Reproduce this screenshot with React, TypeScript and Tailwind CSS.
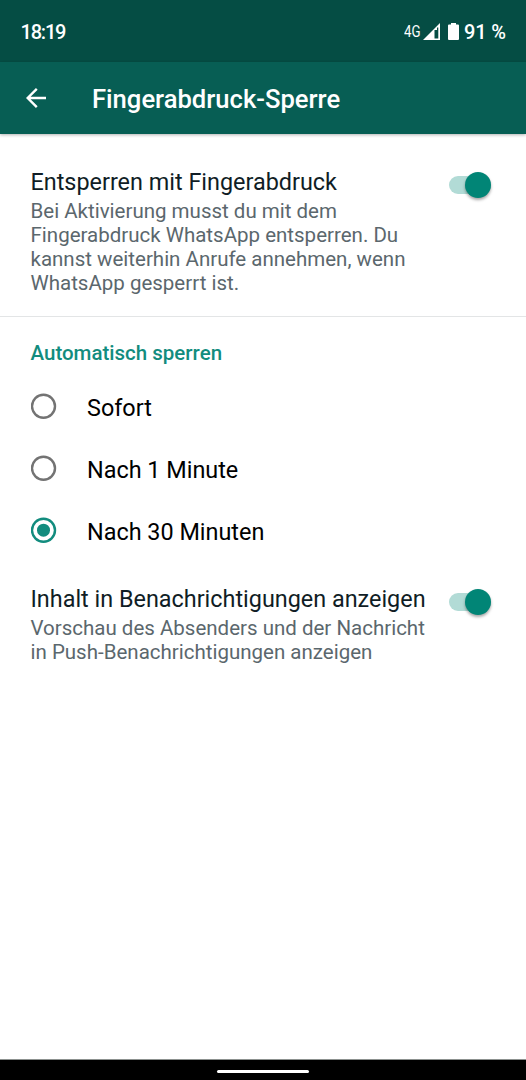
import { useState } from 'react';
import clsx from 'clsx';

interface SwitchProps {
  checked: boolean;
  label: string;
  onChange: (checked: boolean) => void;
}

interface SettingRowProps {
  title: string;
  lines: string[];
  checked: boolean;
  onChange: (checked: boolean) => void;
}

const lockOptions = [
  { id: 'now', label: 'Sofort' },
  { id: '1min', label: 'Nach 1 Minute' },
  { id: '30min', label: 'Nach 30 Minuten' },
];

function Switch({ checked, label, onChange }: SwitchProps) {
  return (
    <button
      role="switch"
      aria-checked={checked}
      aria-label={label}
      onClick={() => onChange(!checked)}
      className={clsx(
        'flex h-[18px] w-[42.5px] shrink-0 items-center rounded-full',
        checked ? 'justify-end bg-[#b2dbd6]' : 'justify-start bg-gray-300'
      )}
    >
      <span
        className={clsx(
          'size-[26px] shrink-0 rounded-full shadow-[0_2px_3px_rgba(0,0,0,0.35)]',
          checked ? 'bg-[#018576]' : 'bg-gray-50'
        )}
      />
    </button>
  );
}

function RadioIcon({ selected }: { selected: boolean }) {
  return (
    <svg
      className={clsx('size-[26px] shrink-0', selected ? 'text-[#128c7e]' : 'text-[#737373]')}
      viewBox="0 0 26 26"
    >
      <circle cx="12.5" cy="13.2" r="11.5" fill="none" stroke="currentColor" strokeWidth="2.4" />
      {selected && <circle cx="12.5" cy="13.2" r="6.5" fill="currentColor" />}
    </svg>
  );
}

function SettingRow({ title, lines, checked, onChange }: SettingRowProps) {
  return (
    <div className="flex items-start justify-between pr-[35px] pl-[30.5px]">
      <div className="whitespace-nowrap">
        <h2 className="text-[23.4px] leading-[30px] text-[#101d25]">{title}</h2>
        <p className="mt-[2px] text-[20.5px] leading-6 text-[#5b676d]">
          {lines.map((line) => (
            <span key={line} className="block">
              {line}
            </span>
          ))}
        </p>
      </div>
      <div className="mt-[9px] flex">
        <Switch checked={checked} label={title} onChange={onChange} />
      </div>
    </div>
  );
}

function StatusBar() {
  return (
    <div className="flex h-[62px] items-center justify-between bg-[#054d44] pt-px pr-5 pl-[20.5px] text-white">
      <span className="text-[20px] font-medium tracking-[-1.2px]">18:19</span>
      <div className="flex items-center">
        <span className="w-[19px] text-[16px]">
          <span className="inline-block origin-left scale-x-[0.83]">4G</span>
        </span>
        <svg width="17" height="17" viewBox="0 0 17 17" fill="white">
          <path fillRule="evenodd" d="M17 0v17H0zM11.5 7v8.500h3.800V4.500h-1.300v2.500z" />
        </svg>
        <svg className="ml-2" width="11" height="17" viewBox="0 0 11 17" fill="white">
          <path d="M3 0h5v1.500h2q1 0 1 1V16q0 1-1 1H1q-1 0-1-1V2.500q0-1 1-1h2z" />
        </svg>
        <span className="ml-[5px] text-[20px] font-medium tracking-[-0.1px]">91 %</span>
      </div>
    </div>
  );
}

export default function App() {
  const [fingerprint, setFingerprint] = useState(true);
  const [preview, setPreview] = useState(true);
  const [lockAfter, setLockAfter] = useState('30min');

  return (
    <div className="flex h-screen flex-col overflow-hidden bg-white font-['Roboto','Noto_Sans',sans-serif]">
      <StatusBar />

      {/* App bar */}
      <header className="flex h-[72px] shrink-0 items-center bg-[#075e54] pl-[26px] text-white shadow-[0_1px_3px_rgba(0,0,0,0.3)]">
        <button aria-label="Zurück">
          <svg width="20" height="20" viewBox="0 0 20 20" fill="none" stroke="white" strokeWidth="2.4">
            <path d="M20 10H2M10.800.900L1.700 10l9.100 9.100" />
          </svg>
        </button>
        <h1 className="ml-[46px] pt-[2px] text-[25.6px] font-medium">Fingerabdruck-Sperre</h1>
      </header>

      <main className="flex-1">
        <section className="h-[183px] border-b border-[#e3e5e6] pt-[33px]">
          <SettingRow
            title="Entsperren mit Fingerabdruck"
            lines={[
              'Bei Aktivierung musst du mit dem',
              'Fingerabdruck WhatsApp entsperren. Du',
              'kannst weiterhin Anrufe annehmen, wenn',
              'WhatsApp gesperrt ist.',
            ]}
            checked={fingerprint}
            onChange={setFingerprint}
          />
        </section>

        {/* Auto lock */}
        <section className="pt-[21px]">
          <h2 className="pl-[30.5px] text-[20.5px] leading-[30px] font-medium text-[#128c7e]">
            Automatisch sperren
          </h2>
          <div role="radiogroup" className="mt-[7px]">
            {lockOptions.map((option) => {
              const selected = option.id === lockAfter;
              return (
                <button
                  key={option.id}
                  role="radio"
                  aria-checked={selected}
                  onClick={() => setLockAfter(option.id)}
                  className="flex h-[62px] w-full items-center pl-[31px] text-left"
                >
                  <RadioIcon selected={selected} />
                  <span className="ml-[30px] pt-[5px] text-[23.4px] text-black">{option.label}</span>
                </button>
              );
            })}
          </div>
        </section>

        <section className="pt-[23px]">
          <SettingRow
            title="Inhalt in Benachrichtigungen anzeigen"
            lines={['Vorschau des Absenders und der Nachricht', 'in Push-Benachrichtigungen anzeigen']}
            checked={preview}
            onChange={setPreview}
          />
        </section>
      </main>

      {/* Gesture bar */}
      <footer className="flex h-[21px] shrink-0 items-center justify-center border-t border-[#8c918f] bg-black">
        <div className="mt-[2px] h-[3px] w-[92px] rounded-full bg-white" />
      </footer>
    </div>
  );
}
